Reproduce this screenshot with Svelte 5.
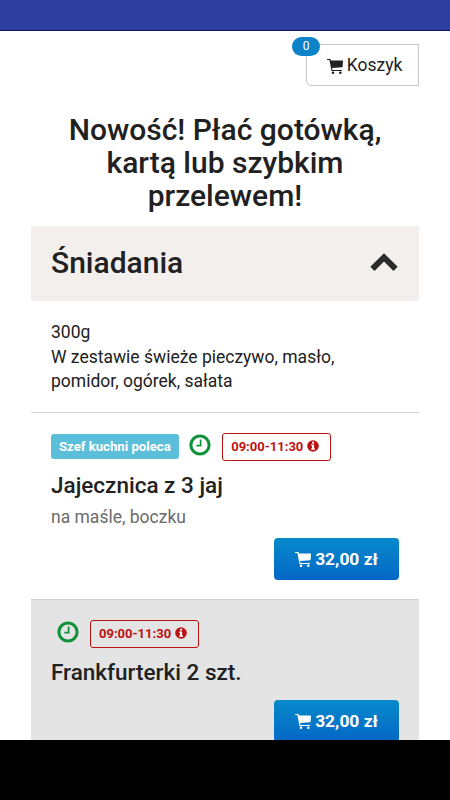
<script lang="ts">
	interface Dish {
		name: string;
		description?: string;
		recommended: boolean;
		hours: string;
		price: string;
	}

	const cartCount = 0;

	const dishes: Dish[] = [
		{
			name: 'Jajecznica z 3 jaj',
			description: 'na maśle, boczku',
			recommended: true,
			hours: '09:00-11:30',
			price: '32,00 zł',
		},
		{
			name: 'Frankfurterki 2 szt.',
			recommended: false,
			hours: '09:00-11:30',
			price: '32,00 zł',
		},
	];
</script>

{#snippet cartIcon()}
	<svg class="cart-icon" viewBox="0 0 16 15" fill="currentColor">
		<path d="M.5 0h2.6c.3 0 .5.2.6.5l.3 1.1h11.6c.3 0 .4.2.4.5l-.4 5.6c0 .3-.2.5-.5.5L5 8.9l.5 2h9c.7 0 .7 1.2 0 1.2H5a.6.6 0 0 1-.6-.5L2.4 1.1H.5C-.2 1.1-.2 0 .5 0Z" />
		<circle cx="6" cy="13.7" r="1.3" />
		<circle cx="13.3" cy="13.7" r="1.3" />
	</svg>
{/snippet}

<div class="screen">
	<div class="status-bar"></div>

	<main>
		<div class="top">
			<button class="cart">
				<span class="cart-count">{cartCount}</span>
				{@render cartIcon()}
				<span>Koszyk</span>
			</button>
		</div>

		<h2>Nowość! Płać gotówką, kartą lub szybkim przelewem!</h2>

		<div class="category">
			<h3>Śniadania</h3>
			<svg class="chevron" viewBox="0 0 28 18">
				<path d="M14 .3 27.2 13.2c.3.3.3.7 0 1L24 17.4c-.3.3-.7.3-1 0l-9-8.8-9 8.8c-.3.3-.7.3-1 0L.8 14.2c-.3-.3-.3-.7 0-1Z" fill="currentColor" />
			</svg>
		</div>

		<p class="intro">300g<br />W zestawie świeże pieczywo, masło, pomidor, ogórek, sałata</p>

		{#each dishes as dish}
			<section class="dish">
				<div class="labels">
					{#if dish.recommended}
						<span class="label">Szef kuchni poleca</span>
					{/if}
					<svg class="clock" viewBox="0 0 22 22" fill="none" stroke="currentColor">
						<circle cx="11" cy="11" r="9.1" stroke-width="3" />
						<path d="M11.6 5.5v6.1H7.4" stroke-width="1.7" />
					</svg>
					<span class="hours">
						{dish.hours}
						<svg class="info" viewBox="0 0 12 12">
							<circle cx="6" cy="6" r="5.8" fill="currentColor" />
							<path class="info-mark" d="M5 1.7h2.1v1.7H5zM4 4.5h3.1v3.9h1v1.4H4V8.4h1V5.8H4z" />
						</svg>
					</span>
				</div>
				<h4>{dish.name}</h4>
				{#if dish.description}
					<p class="description">{dish.description}</p>
				{/if}
				<div class="actions">
					<button class="buy">
						{@render cartIcon()}
						<span>{dish.price}</span>
					</button>
				</div>
			</section>
		{/each}
	</main>

	<div class="nav-bar"></div>
</div>

<style>
	:global(body) {
		background: #fff;
	}

	.screen {
		display: flex;
		flex-direction: column;
		height: 800px;
		overflow: hidden;
		font-family: Roboto, 'Liberation Sans', sans-serif;
		font-size: 17.5px;
		color: #212121;
	}

	.status-bar {
		flex: none;
		box-sizing: border-box;
		height: 31px;
		background: #2d3e9e;
		border-bottom: 1px solid #0c1268;
	}

	.nav-bar {
		flex: none;
		height: 60px;
		background: #000;
	}

	main {
		flex: 1;
		min-height: 0;
		overflow: hidden;
		padding: 13px 31px 0;
	}

	h2,
	h3,
	h4,
	p {
		margin: 0;
		font-weight: 500;
	}

	button {
		font: inherit;
		padding: 0;
	}

	.top {
		display: flex;
		justify-content: flex-end;
	}

	.cart {
		position: relative;
		display: flex;
		align-items: center;
		justify-content: center;
		gap: 4px;
		box-sizing: border-box;
		width: 113px;
		height: 42px;
		padding-left: 4px;
		border: 1px solid #c8c8c8;
		border-bottom-left-radius: 5px;
		background: #fff;
		color: #212121;
	}

	.cart-count {
		position: absolute;
		top: -8px;
		left: -15px;
		width: 28px;
		height: 19px;
		border-radius: 10px;
		background: #0c83c8;
		color: #fff;
		font-size: 12px;
		line-height: 18px;
		text-align: center;
	}

	.cart-icon {
		width: 16px;
		height: 15px;
		margin-top: 2px;
	}

	h2 {
		margin-top: 27px;
		font-size: 30px;
		line-height: 33px;
		text-align: center;
	}

	.category {
		display: flex;
		align-items: center;
		justify-content: space-between;
		box-sizing: border-box;
		height: 75px;
		margin-top: 14px;
		padding: 0 21px 3px 20px;
		background: #f2efed;
	}

	h3 {
		font-size: 30px;
		line-height: 33px;
	}

	.chevron {
		width: 28px;
		height: 18px;
		color: #2b2b2b;
	}

	.intro {
		padding: 19px 20px 18px;
		font-weight: 400;
		line-height: 24.7px;
	}

	.dish {
		display: flex;
		flex-direction: column;
		box-sizing: border-box;
		height: 187px;
		padding: 20px 20px 0;
		border-top: 1px solid #d2d2d2;
	}

	.dish:nth-of-type(even) {
		background: #e4e4e4;
	}

	.labels {
		display: flex;
		align-items: center;
		height: 28px;
	}

	.label {
		margin-top: -1px;
		padding: 0 8px;
		border-radius: 3px;
		background: #5bbfda;
		color: #fff;
		font-size: 13.15px;
		font-weight: 700;
		line-height: 25px;
	}

	.clock {
		width: 22px;
		height: 22px;
		margin: -4px 11px 0 6px;
		color: #10913a;
	}

	.label + .clock {
		margin-left: 10.5px;
	}

	.hours {
		display: flex;
		align-items: center;
		gap: 4px;
		box-sizing: border-box;
		height: 28px;
		padding: 0 11px 2px 8px;
		border: 1px solid #bd1212;
		border-radius: 3px;
		color: #bd1212;
		font-size: 13px;
		font-weight: 700;
	}

	.info {
		width: 12px;
		height: 12px;
	}

	.info-mark {
		fill: #fff;
	}

	h4 {
		margin-top: 10px;
		font-size: 22.5px;
		line-height: 28px;
	}

	.description {
		margin-top: 8px;
		color: #6b6b6b;
		font-weight: 400;
		line-height: 20px;
	}

	.actions {
		display: flex;
		justify-content: flex-end;
		margin-top: 14px;
	}

	.description + .actions {
		margin-top: 11px;
	}

	.buy {
		display: flex;
		align-items: center;
		justify-content: center;
		gap: 4px;
		width: 125px;
		height: 42px;
		padding-bottom: 1px;
		border: 0;
		border-radius: 4px;
		background: linear-gradient(#078acb, #0567c6);
		color: #fff;
		font-size: 17.4px;
		font-weight: 700;
	}
</style>
